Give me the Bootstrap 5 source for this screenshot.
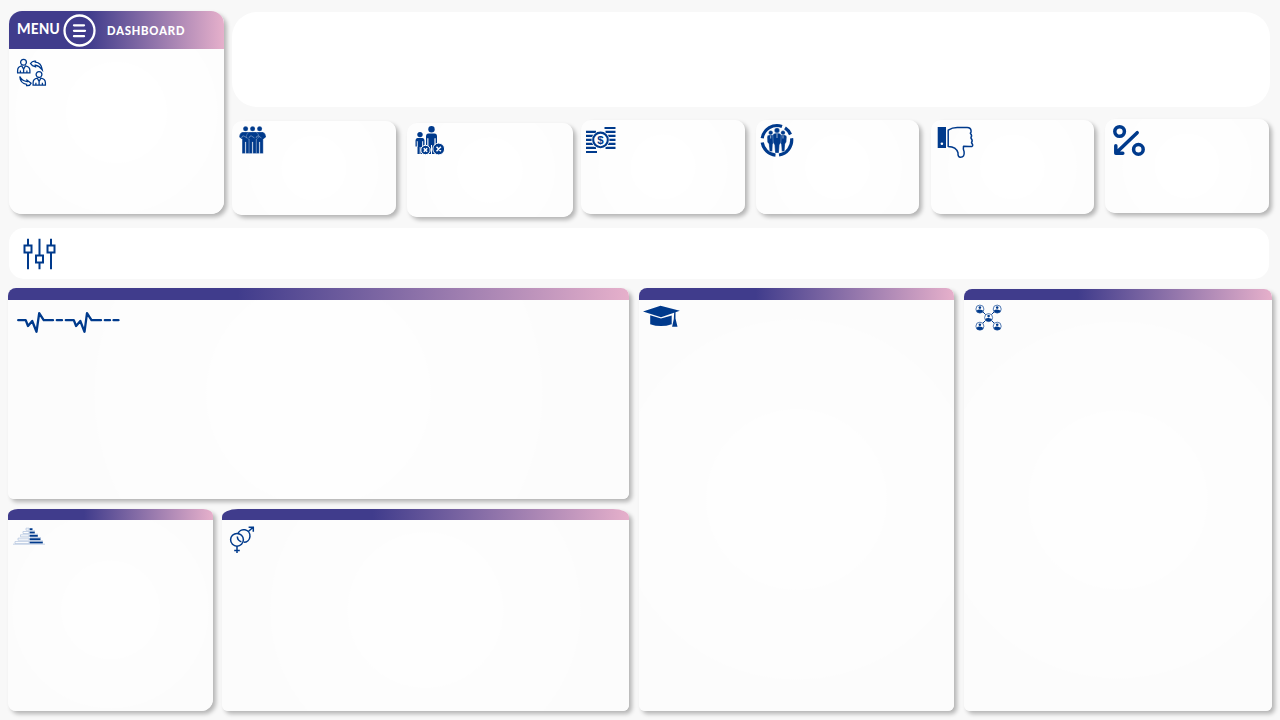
<!DOCTYPE html>
<html lang="en">
<head>
<meta charset="utf-8">
<meta name="viewport" content="width=device-width, initial-scale=1">
<title>Dashboard</title>
<link href="https://cdn.jsdelivr.net/npm/bootstrap@5.3.0/dist/css/bootstrap.min.css" rel="stylesheet">
<style>
body{background:#f8f8f8;font-family:Carlito,Lato,"Open Sans",sans-serif;color:#003a8c}
.page{width:1280px;height:720px;padding:11px 8px 9px}
.panel{border:0;border-radius:10px;background:radial-gradient(circle,#fefefe 34%,#fdfdfd 34.5%,#fdfdfd 68%,#fcfcfc 68.5%);box-shadow:3px 3px 4px rgba(0,0,0,.27);overflow:hidden}
.kpi,.menu-panel{background:radial-gradient(circle,#fff 34%,#fefefe 34.5%,#fefefe 68%,#fdfdfd 68.5%)}
.band{height:12px;flex:none;background:linear-gradient(90deg,#403c8c 0,#403c8c 37%,#e6b0cb 100%)}
.band-thin{height:11px}
.menu-panel{width:215px;height:203px;border-radius:13px;margin-left:1px}
.menu-bar{height:38px;color:#fff;font-weight:700}
.menu-title{font-size:15.5px;line-height:18px;letter-spacing:.4px;width:46px;margin:9px 0 0 8px}
.menu-sub{font-size:13.4px;line-height:16px;letter-spacing:.75px;margin:12px 0 0 11px}
.hero{height:95px;border-radius:25px;background:#fff;margin:1px 2px 0 0}
.kpi{height:94px;width:164px}
.filters{height:51px;border-radius:15px;background:#fff;margin:11px 3px 0 1px}
.left-col{width:621px}
.top-panel{height:211px}
.lower .panel{border-radius:8px 8px 6px 6px}
.lower .age{border-radius:10px 10px 12px 8px / 6px 6px 12px 8px}
.lower .gender{border-radius:16px 16px 6px 6px / 8px 8px 6px 6px}
svg{display:block;flex:none;overflow:visible}
.ln{fill:none;stroke:#003a8c}
.fl{fill:#003a8c}
</style>
</head>
<body>
<svg width="0" height="0" class="d-none">
  <defs>
    <g id="worker"><circle cx="6.500" cy="3.800" r="2.900"/><path d="M.6 14.400V12q0-3.800 4.200-4.600l1.800 3.200 1.800-3.200q4.500.800 4.500 4.600v2.400zM6.600 10.600v3.400M3.400 12v2.200M9.900 12v2.200"/></g>
    <g id="guard"><circle cx="7" cy="2.800" r="2.500"/><path d="M4 6h6q3 .6 3.500 5l-2.500 2-.4.200V27.500H7.300V16h-.6v11.500H3.500V12.900L3 13 .5 11Q1 6.600 4 6z"/></g>
    <g id="member"><circle cx="4.600" cy="4.600" r="4" fill="#fff" stroke="#3c69a8" stroke-width=".9"/><circle class="fl" cx="4.600" cy="3.100" r="1.300"/><path class="fl" d="M1.200 6.300Q2.500 4.800 4.600 5t3.400 1.300Q7.300 8.500 4.600 8.500T1.200 6.300z"/></g>
  </defs>
</svg>
<main class="page d-flex flex-column overflow-hidden">
  <div class="d-flex">
    <section class="card panel menu-panel flex-shrink-0">
      <div class="band menu-bar d-flex">
        <div class="menu-title">MENU</div>
        <svg width="33" height="33" viewBox="0 0 33 33" style="margin:3px 0 0"><g fill="none" stroke="#fff" stroke-width="2.300" stroke-linecap="round"><circle cx="16.500" cy="16.500" r="15"/><path d="M11 11.300h10M11 16.800h11M11 22.200h10"/></g></svg>
        <div class="menu-sub">DASHBOARD</div>
      </div>
      <svg width="32" height="31" viewBox="0 0 32 31" style="margin:9px 0 0 8px"><g class="ln" stroke-width="1.300"><use href="#worker" y=".5"/><use href="#worker" x="15.500" y="12.800"/><path d="M13.500 5.500q2-3 5-2.300l-.2 1q6 .5 7 7.700-3-4-7-4.700l.2 1.500-3-1zM2.800 18.500q2 4.500 7.500 5l-.2-1.300 4 3q-1.200 3-4.500 2.400v-1.300Q3.300 25.500 2.800 18.500z"/></g></svg>
    </section>
    <div class="flex-grow-1 d-flex flex-column" style="margin-left:8px">
      <header class="hero"></header>
      <div class="d-flex">
        <section class="card panel kpi" style="margin:14px 0 0 0">
          <svg width="27" height="28" viewBox="0 0 27 28" style="margin:5px 0 0 7px"><g class="fl" stroke="#fff" stroke-width=".25"><use href="#guard" x="-.4"/><use href="#guard" x="13.600"/><use href="#guard" x="6.600"/></g><path d="M2.500 12q1-3 2.500-2l3 2M10 12q1-3 2.500-2l3 2M17 12q1-3 2.500-2l3 2" fill="none" stroke="#9db4d5" stroke-width=".6"/></svg>
        </section>
        <section class="card panel kpi" style="margin:16px 0 0 11px;width:166px">
          <svg width="30" height="28" viewBox="0 0 30 28" style="margin:3px 0 0 8px"><g class="fl"><circle cx="5" cy="8.600" r="2.700"/><path d="M2.500 12h5q2 .2 2 2.500v6H8v-5h-.6V28H5.500v-7h-.8v7H2.500V15.500H2v5H.5v-6Q.5 12 2.500 12z"/><circle cx="16.500" cy="3.200" r="3.200"/><path d="M13.500 7.500h6q2.500.2 2.500 3V20h-1.600v-7.500h-.8V28H17v-9h-1v9h-2.700V12.500h-.8V20H11v-9.500q0-2.800 2.500-3z"/><circle cx="10.500" cy="24" r="4.700" stroke="#fff"/><circle cx="23.700" cy="23" r="5.900" stroke="#fff"/></g><path d="M2.200 15v6M7.700 15v6M12.800 12v8M20.100 12v7" stroke="#fff" stroke-width=".6"/><path d="m8.800 22.300 3.400 3.400m0-3.400-3.400 3.400M21.500 20.800l4.400 4.400m0-4.400-4.400 4.400" stroke="#fff" stroke-width="1.500"/></svg>
        </section>
        <section class="card panel kpi" style="margin:13px 0 0 8px">
          <svg width="30" height="28" viewBox="0 0 30 28" style="margin:6px 0 0 4px"><path class="ln" stroke-width="2.100" d="M19.500 2h11M1 5.900h10M20.500 5.900h10M1 9.900h8M22.500 9.900h8M1 13.900h7M23.500 13.900h7M1 17.900h8M22.500 17.900h8M1 21.900h10M20.500 21.900h10M1 26h11"/><circle cx="15.500" cy="13.900" r="9" fill="#fff"/><circle class="ln" cx="15.500" cy="13.900" r="7.300" stroke-width="2.100"/><text class="fl" x="15.500" y="18" font-size="11.500" font-weight="700" text-anchor="middle" font-family="Liberation Sans,sans-serif">$</text></svg>
        </section>
        <section class="card panel kpi" style="margin:13px 0 0 11px;width:163px">
          <svg width="34" height="34" viewBox="0 0 34 34" style="margin:3px 0 0 4px"><g class="ln" stroke-width="3.200"><path d="M2.200 15.300A15 15 0 0 1 22 3.400M25 4.900A15 15 0 0 1 30.500 11.500M31.600 15.300A15 15 0 0 1 19 32M15.500 32.200A15 15 0 0 1 2.200 19.500"/></g><g class="fl" stroke="#fff" stroke-width=".3"><g id="person"><circle cx="10.700" cy="9.800" r="2.200"/><path d="M9 12h3.600q2 .3 1.900 2l-.4 5-1.300 2-.5 7.500H9.500L8.800 21l-1.500-2-.2-5q.1-1.800 1.900-2z"/></g><use href="#person" x="12.300"/><circle cx="17" cy="7.400" r="2.600"/><path d="M15 10.200h4q2.300.3 2.200 2.300l-.4 7-1.300 2.500-.6 8h-3.800l-.6-8-1.300-2.500-.4-7q0-2 2.200-2.300z"/></g><path d="M17 11v4M10.700 12.500v3M23 12.500v3" stroke="#fff" stroke-width=".6"/></svg>
        </section>
        <section class="card panel kpi" style="margin:13px 0 0 12px;width:163px">
          <svg width="36" height="32" viewBox="0 0 36 32" style="margin:6px 0 0 6px"><path class="fl" d="M.7 1h8.300v21H.7z"/><circle cx="4.900" cy="17.700" r="1.300" fill="#fff"/><path class="ln" stroke-width="1.500" stroke-linejoin="round" d="M11.200 20.500V4.200q4-2.600 9-2.600h10q3.600 0 3.900 3.500.1 1.500-.8 2 2.200 2.500.6 4.800 2.200 2.400.6 4.800 2.300 2.900.3 3.800Q33.500 20.500 26.500 20.300q-.6 2.500.6 5.500.7 5.300-3.600 5.500-2.800-.1-2.500-4.500-1.700-6-9.800-6.300z"/></svg>
        </section>
        <section class="card panel kpi" style="margin:12px 0 0 11px;width:164px">
          <svg width="32" height="32" viewBox="0 0 32 32" style="margin:6px 0 0 8px"><g class="ln" stroke-width="3.500"><circle cx="6.600" cy="6.500" r="4.800"/><circle cx="25.400" cy="24.400" r="4.800"/><path stroke-linecap="round" stroke-linejoin="round" d="M24.200 7.700 3 28M2.800 20.800v7.500h7"/></g></svg>
        </section>
      </div>
    </div>
  </div>

  <section class="filters flex-shrink-0 d-flex">
    <svg width="34" height="32" viewBox="0 0 34 32" style="margin:10px 0 0 14px"><g class="ln" stroke-width="2"><path d="M5 .7V7M5 15v16.200M16.500.7V17M16.500 25v6.200M28 .7V7M28 15v16.200M1.500 7.500h7v7h-7zM13 17.500h7v7h-7zM24.500 7.500h7v7h-7z"/></g></svg>
  </section>

  <div class="lower d-flex flex-grow-1" style="margin-top:9px">
    <div class="left-col d-flex flex-column flex-shrink-0">
      <section class="card panel top-panel">
        <div class="band"></div>
        <svg width="103" height="22" viewBox="0 0 103 22" style="margin:12px 0 0 9px"><g class="ln" stroke-width="2.300" stroke-linecap="round" stroke-linejoin="round"><path d="M1.200 8.200h7.500l2.300 5.800 4.200-5 4.300 10.800L22.200 1.200l4.500 7H36M39.800 8.200H45M48.800 8.200h8l2.300 5.800 4.200-5L67.500 19.800 70 1.200l4.500 7H84M87.800 8.200H93M96.500 8.200h5"/></g></svg>
      </section>
      <div class="d-flex flex-grow-1" style="margin-top:10px">
        <section class="card panel age" style="width:205px">
          <div class="band band-thin"></div>
          <svg width="34" height="18" viewBox="0 0 34 18" style="margin:7px 0 0 4px"><path class="fl" d="M17.500 1.200h3v2h-3zM17.500 4.500h5.300v2h-5.300zM17.500 7.800h8.300v2h-8.300zM17.500 11.200h11v2h-11zM17.500 14.600h13.300v2H17.500z"/><path fill="#fff" stroke="#b6c7df" stroke-width=".8" d="M14 1.200h3v2h-3zM11 4.500h6v2h-6zM8.500 7.800H17v2H8.500zM6 11.200h11v2H6zM3 14.600h14v2H3z"/><path d="M1 17.200h32M18 3.800h5M18 7.200h8M18 10.500h11M18 13.900h13" stroke="#b6c7df" stroke-width=".8"/></svg>
        </section>
        <section class="card panel gender flex-grow-1" style="margin-left:9px">
          <div class="band band-thin"></div>
          <svg width="26" height="28" viewBox="0 0 26 28" style="margin:6px 0 0 7px"><g class="ln" stroke-width="1.500"><circle cx="8" cy="13.800" r="6.400"/><path d="M8 20.200v6.700M5.200 24.600h5.600M8.700 8A6.300 6.300 0 1 1 14.800 16.300M8.300 10.500Q8.500 14.600 12.400 15.700M19.300 5.500 24.200 1.200M19.600 1.200h4.700v4.600"/></g></svg>
        </section>
      </div>
    </div>
    <section class="card panel" style="width:315px;margin-left:10px">
      <div class="band"></div>
      <svg width="38" height="23" viewBox="0 0 38 23" style="margin:5px 0 0 4px"><g class="fl"><path d="M0 6.500 17.500.8l19.300 5-18.800 6.500zM7.200 10.200l10.800 3.400 10.700-3.200v8.800q-10.700 3.800-21.500 0z"/><path d="M31.200 7h1.300v6.500l2 8.200h-5.400L30.800 14z"/></g></svg>
    </section>
    <section class="card panel" style="width:308px;margin:1px 0 0 10px">
      <div class="band band-thin"></div>
      <svg width="27" height="27" viewBox="0 0 27 27" style="margin:4px 0 0 11px"><path class="ln" stroke-width="1" d="m5 5 17 17M22 5 5 22"/><use href="#member" x=".3" y=".5"/><use href="#member" x="17.600" y=".5"/><use href="#member" x="9" y="9"/><use href="#member" x=".3" y="17.600"/><use href="#member" x="17.600" y="17.600"/></svg>
    </section>
  </div>
</main>
<script src="https://cdn.jsdelivr.net/npm/bootstrap@5.3.0/dist/js/bootstrap.bundle.min.js"></script>
</body>
</html>
